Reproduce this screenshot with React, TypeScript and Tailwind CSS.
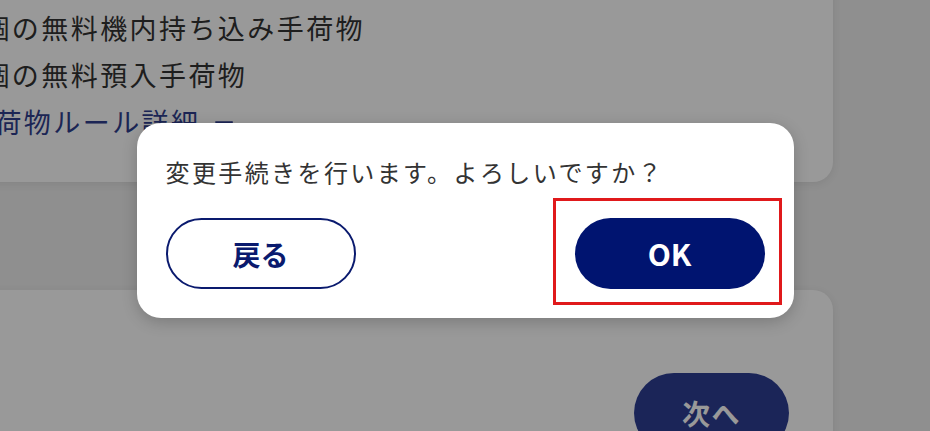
import { useState } from 'react';

const font = { fontFamily: '"Noto Sans CJK JP", "Noto Sans", sans-serif' };

function ExternalIcon() {
  return (
    <svg width="22" height="22" viewBox="0 0 20 20" fill="none" stroke="currentColor" strokeWidth="1.8" className="ml-[12px] inline-block align-[-9px]">
      <path d="M3 2h15v15" />
      <path d="M9 5H4v11h11v-5" />
      <path d="M9 11l9-9" />
    </svg>
  );
}

function BaggageCard() {
  return (
    <div className="-mt-[20px] ml-[-40px] w-[873px] rounded-br-[20px] bg-white pl-[5px] pt-[24px] pb-[37px] shadow-[0_2px_8px_rgba(0,0,0,0.08)]">
      <div className="text-[27px] leading-[47px] tracking-[0.09em] text-[#333333] whitespace-nowrap">
        <p>1個の無料機内持ち込み手荷物</p>
        <p>1個の無料預入手荷物</p>
        <p className="text-[#303f8e]">
          手荷物ルール詳細
          <ExternalIcon />
        </p>
      </div>
    </div>
  );
}

function NextCard() {
  return (
    <div className="mt-[108px] ml-[-40px] flex h-[200px] w-[873px] justify-end rounded-tr-[20px] bg-white pr-[44px] pt-[83px] shadow-[0_2px_8px_rgba(0,0,0,0.08)]">
      <button className="h-[80px] w-[155px] rounded-full bg-[#2d3e93] text-[28px] font-bold tracking-[0.05em] text-white">
        次へ
      </button>
    </div>
  );
}

function ConfirmDialog({ onClose }: { onClose: () => void }) {
  return (
    <div className="absolute inset-0 flex items-center justify-center bg-black/40">
      <div className="mt-[10px] flex h-[195px] w-[657px] flex-col rounded-[24px] bg-white px-[29px] pt-[31px] pb-[29px] shadow-[0_4px_16px_rgba(0,0,0,0.2)]">
        <p className="text-[24px] leading-[36px] tracking-[0.1em] text-[#333333]">
          変更手続きを行います。よろしいですか？
        </p>
        <div className="mt-[28px] flex justify-between">
          <button
            onClick={onClose}
            className="h-[71px] w-[190px] rounded-full border-2 border-[#0a1a6e] bg-white text-[28px] font-bold text-[#0a1a6e]"
          >
            戻る
          </button>
          <button
            onClick={onClose}
            className="h-[71px] w-[190px] rounded-full bg-[#001470] text-[30px] font-bold text-white"
          >
            OK
          </button>
        </div>
      </div>
    </div>
  );
}

export default function App() {
  const [open, setOpen] = useState(true);

  return (
    <div className="relative h-[431px] w-[930px] overflow-hidden bg-[#eeeeee]" style={font}>
      <BaggageCard />
      <NextCard />
      {open && <ConfirmDialog onClose={() => setOpen(false)} />}
      {open && (
        <div className="pointer-events-none absolute left-[553px] top-[198px] h-[107px] w-[229px] border-[3px] border-[#e0191b]" />
      )}
    </div>
  );
}
